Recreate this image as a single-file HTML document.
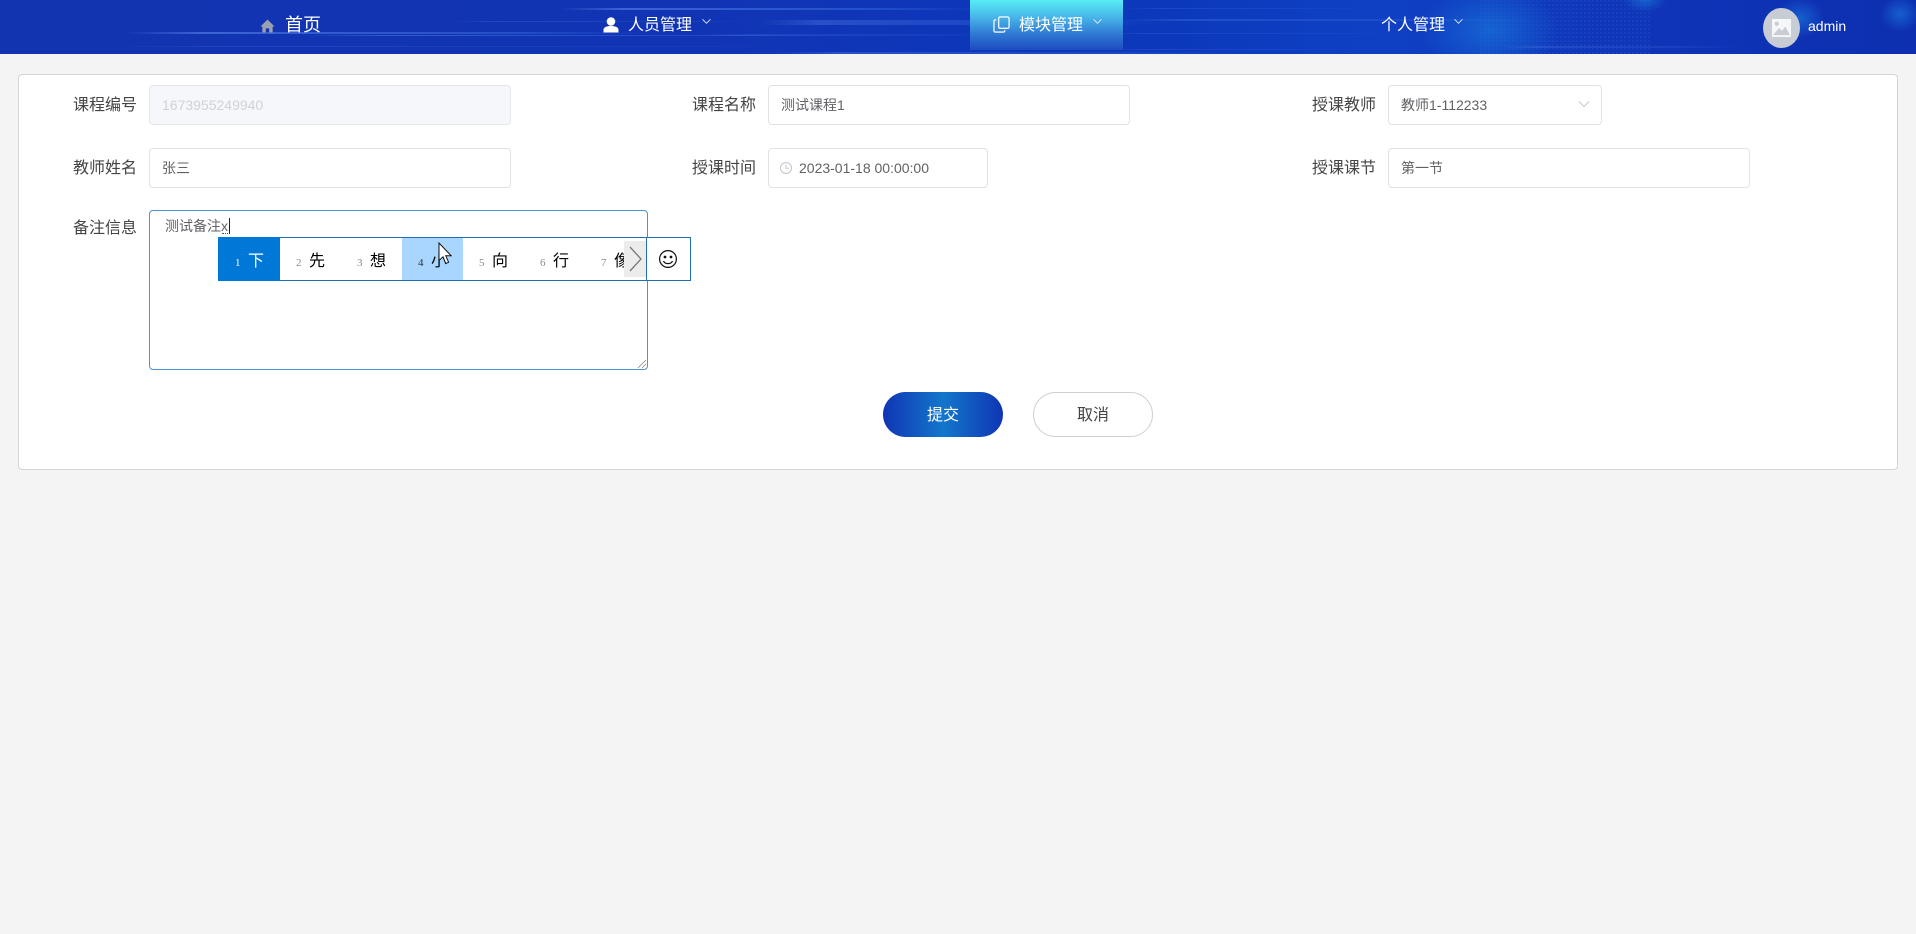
<!DOCTYPE html>
<html lang="zh-CN">
<head>
<meta charset="utf-8">
<title>课程管理</title>
<style>
html,body{margin:0;padding:0;width:1916px;height:934px;overflow:hidden;background:#f4f4f4;font-family:"Liberation Sans","Noto Sans CJK SC",sans-serif;}
.a{position:absolute;white-space:nowrap;}
#hd{position:absolute;left:0;top:0;width:1916px;height:54px;overflow:hidden;background:linear-gradient(90deg,#1234b0 0%,#1134b4 35%,#0c38bb 60%,#0f40c4 72%,#0f35b8 85%,#0d2fb0 100%);}
.nav{color:#fff;font-size:16px;line-height:24px;top:14px;}
#card{position:absolute;left:18px;top:74px;width:1878px;height:394px;background:#fff;border:1px solid #d4d4d4;border-radius:4px;}
.lb{color:#444;font-size:16px;line-height:24px;}
.ip{box-sizing:border-box;height:40px;background:#fff;border:1px solid #dfe2e7;border-radius:4px;color:#606266;font-size:14px;line-height:38px;padding-left:12px;}
.c{font-family:"WenQuanYi Zen Hei","Noto Sans CJK SC",sans-serif;font-size:16px;line-height:20px;color:#000;top:249px;}
.n{font-family:"Liberation Serif",serif;font-size:11px;line-height:12px;color:#8a8a8a;top:257px;}
</style>
</head>
<body>
<div id="hd">
<svg width="1916" height="54" style="position:absolute;left:0;top:0">
<defs>
<linearGradient id="l" x1="0" x2="1" y1="0" y2="0"><stop offset="0" stop-color="#5f8cf0" stop-opacity="0"/><stop offset=".15" stop-color="#5f8cf0" stop-opacity=".55"/><stop offset=".75" stop-color="#3f78e8" stop-opacity=".4"/><stop offset="1" stop-color="#3f78e8" stop-opacity="0"/></linearGradient>
<radialGradient id="g"><stop offset="0" stop-color="#1a78dc" stop-opacity=".65"/><stop offset="1" stop-color="#1a78dc" stop-opacity="0"/></radialGradient>
<pattern id="dots" width="4" height="4" patternUnits="userSpaceOnUse"><rect width="2" height="2" fill="#3a7ae0" opacity=".14"/></pattern>
</defs>
<rect x="1480" y="0" width="170" height="54" fill="url(#dots)"/>
<ellipse cx="1490" cy="30" rx="70" ry="45" fill="url(#g)"/>
<ellipse cx="1645" cy="0" rx="22" ry="12" fill="url(#g)"/>
<ellipse cx="1800" cy="18" rx="24" ry="20" fill="url(#g)"/>
<ellipse cx="1900" cy="14" rx="20" ry="18" fill="url(#g)"/>
<rect x="125" y="32" width="520" height="2" fill="url(#l)"/>
<rect x="300" y="35" width="560" height="1" fill="url(#l)" opacity=".8"/>
<rect x="560" y="8" width="420" height="2" fill="url(#l)"/>
<rect x="450" y="21" width="300" height="1" fill="url(#l)" opacity=".4"/>
<rect x="757" y="20" width="400" height="5" fill="url(#l)" opacity=".55"/>
<rect x="110" y="46" width="700" height="1" fill="url(#l)" opacity=".35"/>
<rect x="700" y="34" width="300" height="2" fill="url(#l)" opacity=".35"/>
<rect x="1123" y="19" width="420" height="2" fill="url(#l)" opacity=".5"/>
<rect x="1123" y="8" width="250" height="1" fill="url(#l)" opacity=".35"/>
<rect x="1100" y="33" width="300" height="1" fill="url(#l)" opacity=".35"/>
<rect x="1110" y="49" width="240" height="1" fill="url(#l)" opacity=".35"/>
<rect x="770" y="52" width="480" height="2" fill="url(#l)" opacity=".6"/>
<rect x="1500" y="46" width="240" height="2" fill="url(#l)" opacity=".45"/>
</svg>
<div class="a" style="left:970px;top:0;width:153px;height:50px;background:linear-gradient(180deg,#57eef6 0%,#47b4e8 35%,#2e76d2 70%,#1d4cc0 100%);"></div>

<svg class="a" style="left:260px;top:19px" width="15" height="14" viewBox="0 0 16 15"><path d="M8 0.5 L15.5 8 L13.5 8 L13.5 14.5 L9.8 14.5 L9.8 10 L6.2 10 L6.2 14.5 L2.5 14.5 L2.5 8 L0.5 8 Z" fill="#9aa0ad"/></svg>
<div class="a nav" style="left:285px;top:12px;font-size:18px;line-height:26px;">首页</div>

<svg class="a" style="left:603px;top:17px" width="16" height="16" viewBox="0 0 16 16"><circle cx="8" cy="4.5" r="4.3" fill="#fff"/><path d="M0.5 15.5 V13 C0.5 10 4 9 8 9 C12 9 15.5 10 15.5 13 V15.5 Z" fill="#fff"/></svg>
<div class="a nav" style="left:628px;">人员管理</div>
<svg class="a" style="left:701px;top:18px" width="11" height="7" viewBox="0 0 12 8"><path d="M1.5 1.5 L6 6 L10.5 1.5" fill="none" stroke="#e8eefc" stroke-width="1"/></svg>

<svg class="a" style="left:993px;top:16px" width="17" height="17" viewBox="0 0 18 18" fill="none" stroke="#eef6ff" stroke-width="1.4"><rect x="6" y="1" width="11" height="12" rx="1.5"/><path d="M3.5 4 H2.5 A1.5 1.5 0 0 0 1 5.5 V15.5 A1.5 1.5 0 0 0 2.5 17 H11 A1.5 1.5 0 0 0 12.5 15.5 V15"/></svg>
<div class="a nav" style="left:1019px;">模块管理</div>
<svg class="a" style="left:1092px;top:18px" width="11" height="7" viewBox="0 0 12 8"><path d="M1.5 1.5 L6 6 L10.5 1.5" fill="none" stroke="#e8f4ff" stroke-width="1"/></svg>

<div class="a nav" style="left:1381px;">个人管理</div>
<svg class="a" style="left:1453px;top:18px" width="11" height="7" viewBox="0 0 12 8"><path d="M1.5 1.5 L6 6 L10.5 1.5" fill="none" stroke="#e8eefc" stroke-width="1"/></svg>

<div class="a" style="left:1763px;top:8px;width:37px;height:40px;border-radius:50%;background:#c8ccd4;"></div>
<svg class="a" style="left:1772px;top:19px" width="19" height="18" viewBox="0 0 20 19"><rect width="20" height="19" fill="#f6f7f9"/><circle cx="5" cy="5" r="2.2" fill="#c8ccd4"/><path d="M1 17 L7.5 9.5 L10.5 12.5 L14 8 L19 17 Z" fill="#c8ccd4"/></svg>
<div class="a" style="left:1808px;top:17px;color:#fff;font-size:14px;line-height:18px;">admin</div>
</div>

<div id="card"></div>

<div class="a lb" style="left:73px;top:94px;">课程编号</div>
<div class="a ip" style="left:149px;top:85px;width:362px;background:#f5f7fa;border-color:#e4e7ed;color:#d0d2d6;">1673955249940</div>
<div class="a lb" style="left:692px;top:94px;">课程名称</div>
<div class="a ip" style="left:768px;top:85px;width:362px;">测试课程1</div>
<div class="a lb" style="left:1312px;top:94px;">授课教师</div>
<div class="a ip" style="left:1388px;top:85px;width:214px;">教师1-112233</div>
<svg class="a" style="left:1578px;top:100px" width="12" height="8" viewBox="0 0 12 8"><path d="M1 1.5 L6 6.5 L11 1.5" fill="none" stroke="#c0c4cc" stroke-width="1"/></svg>

<div class="a lb" style="left:73px;top:157px;">教师姓名</div>
<div class="a ip" style="left:149px;top:148px;width:362px;">张三</div>
<div class="a lb" style="left:692px;top:157px;">授课时间</div>
<div class="a ip" style="left:768px;top:148px;width:220px;padding-left:30px;">2023-01-18 00:00:00</div>
<svg class="a" style="left:779px;top:161px" width="14" height="14" viewBox="0 0 14 14" fill="none" stroke="#c0c4cc" stroke-width="1"><circle cx="7" cy="7" r="5.5"/><path d="M7 3.5 V7.2 H10"/></svg>
<div class="a lb" style="left:1312px;top:157px;">授课课节</div>
<div class="a ip" style="left:1388px;top:148px;width:362px;">第一节</div>

<div class="a lb" style="left:73px;top:217px;">备注信息</div>
<div class="a" style="left:149px;top:210px;width:499px;height:160px;box-sizing:border-box;background:#fff;border:1px solid #4b92d6;border-radius:4px;"></div>
<div class="a" style="left:165px;top:216px;color:#606266;font-size:14px;line-height:20px;">测试备注x</div>
<div class="a" style="left:222px;top:233px;width:8px;border-top:1px dotted #555;"></div>
<div class="a" style="left:229px;top:218px;width:1px;height:16px;background:#222;"></div>
<svg class="a" style="left:637px;top:359px" width="10" height="10" viewBox="0 0 10 10"><path d="M1 9 L9 1 M5 9 L9 5" stroke="#888" stroke-width=".8" fill="none"/></svg>

<div class="a" style="left:218px;top:237px;width:473px;height:44px;box-sizing:border-box;background:#fff;border:1px solid #1f6fb0;"></div>
<div class="a" style="left:218px;top:237px;width:62px;height:44px;background:#0078d7;"></div>
<div class="a" style="left:402px;top:238px;width:61px;height:42px;background:#a8d6ff;"></div>
<div class="a" style="left:646px;top:237px;width:1px;height:44px;background:#1f6fb0;"></div>

<div class="a n" style="left:235px;color:#fff;">1</div><div class="a c" style="left:248px;color:#fff;">下</div>
<div class="a n" style="left:296px;">2</div><div class="a c" style="left:309px;">先</div>
<div class="a n" style="left:357px;">3</div><div class="a c" style="left:370px;">想</div>
<div class="a n" style="left:418px;color:#333;">4</div><div class="a c" style="left:431px;">小</div>
<div class="a n" style="left:479px;">5</div><div class="a c" style="left:492px;">向</div>
<div class="a n" style="left:540px;">6</div><div class="a c" style="left:553px;">行</div>
<div class="a n" style="left:601px;">7</div><div class="a c" style="left:614px;">像</div>

<div class="a" style="left:624px;top:241px;width:22px;height:36px;background:#ececec;"></div>
<svg class="a" style="left:628px;top:246px" width="16" height="26" viewBox="0 0 16 26"><path d="M2 1 L13 13 L2 25" fill="none" stroke="#777" stroke-width="1.3"/></svg>
<svg class="a" style="left:658px;top:249px" width="20" height="20" viewBox="0 0 20 20" fill="none" stroke="#111" stroke-width="1.2"><circle cx="10" cy="10" r="8.4"/><circle cx="7" cy="8" r=".8" fill="#111"/><circle cx="13" cy="8" r=".8" fill="#111"/><path d="M5.5 12 C7 15.5 13 15.5 14.5 12"/></svg>

<svg class="a" style="left:438px;top:242px" width="16" height="24" viewBox="0 0 16 24"><path d="M1 1 L1 18.5 L5 14.8 L7.8 21.5 L10.6 20.3 L7.8 13.8 L13.2 13.8 Z" fill="#fff" stroke="#111" stroke-width="1"/></svg>

<div class="a" style="left:883px;top:392px;width:120px;height:45px;border-radius:23px;background:linear-gradient(90deg,#0f35b4 0%,#1377cc 50%,#0f35b4 100%);color:#fff;font-size:16px;line-height:47px;text-align:center;">提交</div>
<div class="a" style="left:1033px;top:392px;width:120px;height:45px;box-sizing:border-box;border:1px solid #d0d0d0;border-radius:23px;background:#fff;color:#444;font-size:16px;line-height:45px;text-align:center;">取消</div>
</body>
</html>
